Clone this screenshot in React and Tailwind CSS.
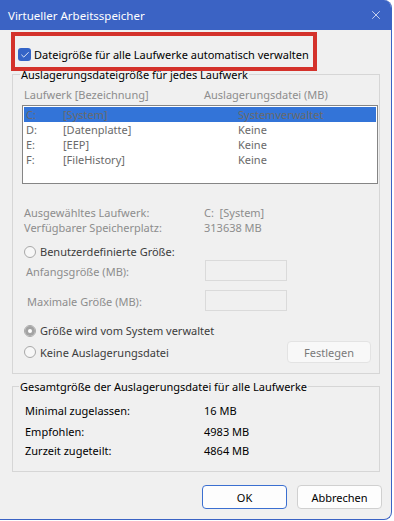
import { Check, X } from "lucide-react"

const drives = [
  { letter: "C:", label: "[System]", size: "Systemverwaltet", selected: true },
  { letter: "D:", label: "[Datenplatte]", size: "Keine" },
  { letter: "E:", label: "[EEP]", size: "Keine" },
  { letter: "F:", label: "[FileHistory]", size: "Keine" },
]

function Radio({ checked, label }) {
  return (
    <div className="flex items-center h-[15px]">
      <span className="w-[12px] h-[12px] rounded-full border border-[#a8a8a8] bg-[#f7f7f7] flex items-center justify-center">
        {checked && (
          <span className="w-[10px] h-[10px] rounded-full bg-[#a3a3a3] flex items-center justify-center">
            <span className="w-[4px] h-[4px] rounded-full bg-white" />
          </span>
        )}
      </span>
      <span className="ml-[4px] text-[#3c3c3c]">{label}</span>
    </div>
  )
}

function App() {
  return (
    <div
      className="w-[394px] h-[521px] bg-white text-[11px] leading-[15px]"
      style={{ fontFamily: '"Segoe UI", "Noto Sans", sans-serif' }}
    >
      <div className="w-[392px] h-[520px] flex flex-col bg-[#f0f0f0] border-r border-b border-[#3b63c4] rounded-tr-[8px] rounded-br-[8px] overflow-hidden">
        <div className="h-[30px] bg-[#3b63c4] flex items-center justify-between pl-[8px] pr-[8px] text-white text-[11.5px] shrink-0">
          <span>Virtueller Arbeitsspeicher</span>
          <X size={14} strokeWidth={1.2} className="text-white" />
        </div>

        <div className="relative flex-1 pl-[12px]">
          <div className="flex items-center h-[15px] mt-[17px] ml-[6px]">
            <span className="w-[13px] h-[13px] rounded-[3px] bg-[#3464c7] flex items-center justify-center">
              <Check size={10} strokeWidth={2} className="text-white" />
            </span>
            <span className="ml-[3px] text-black">Dateigröße für alle Laufwerke automatisch verwalten</span>
          </div>

          <fieldset className="mt-[5px] w-[368px] border border-[#d6d6d6] pb-[10px]">
            <legend className="ml-[7px] px-[1px] text-black">Auslagerungsdateigröße für jedes Laufwerk</legend>

            <div className="flex h-[15px] mt-[5px] text-[#8d8d8d]">
              <span className="ml-[11px] w-[180px]">Laufwerk [Bezeichnung]</span>
              <span>Auslagerungsdatei (MB)</span>
            </div>

            <div className="mt-[3px] ml-[9px] w-[356px] h-[79px] border border-[#858585] bg-white p-[1px]">
              {drives.map((d) => (
                <div
                  key={d.letter}
                  className={
                    "flex h-[15px] pl-[2px] text-[#6a6a6a] " + (d.selected ? "bg-[#3374d8]" : "")
                  }
                >
                  <span className="w-[37px]">{d.letter}</span>
                  <span className="w-[175px]">{d.label}</span>
                  <span>{d.size}</span>
                </div>
              ))}
            </div>

            <div className="mt-[21px] text-[#8d8d8d]">
              <div className="flex h-[15px]">
                <span className="ml-[11px] w-[180px]">Ausgewähltes Laufwerk:</span>
                <span>C:&nbsp; [System]</span>
              </div>
              <div className="flex h-[15px]">
                <span className="ml-[11px] w-[180px]">Verfügbarer Speicherplatz:</span>
                <span>313638 MB</span>
              </div>
            </div>

            <div className="mt-[9px] ml-[11px]">
              <Radio label="Benutzerdefinierte Größe:" />
            </div>

            <div className="flex items-center h-[21px] mt-[1px] text-[#8d8d8d]">
              <span className="ml-[13px] w-[179px] pt-[2px]">Anfangsgröße (MB):</span>
              <span className="w-[82px] h-[21px] border border-[#dadada]" />
            </div>

            <div className="flex items-center h-[21px] mt-[9px] text-[#8d8d8d]">
              <span className="ml-[14px] w-[178px] pt-[2px]">Maximale Größe (MB):</span>
              <span className="w-[82px] h-[21px] border border-[#dadada]" />
            </div>

            <div className="mt-[12px] ml-[11px]">
              <Radio checked label="Größe wird vom System verwaltet" />
            </div>

            <div className="flex items-center justify-between h-[22px] mt-[3px] ml-[11px] mr-[8px]">
              <Radio label="Keine Auslagerungsdatei" />
              <button className="w-[84px] h-[22px] rounded-[4px] border border-[#e3e3e3] bg-[#f8f8f8] text-[#7a7a7a]">
                Festlegen
              </button>
            </div>
          </fieldset>

          <fieldset className="mt-[5px] w-[368px] border border-[#d6d6d6] pb-[13px] text-black">
            <legend className="ml-[6px] px-[1px]">Gesamtgröße der Auslagerungsdatei für alle Laufwerke</legend>
            <div className="flex h-[15px] mt-[9px]">
              <span className="ml-[12px] w-[179px]">Minimal zugelassen:</span>
              <span>16 MB</span>
            </div>
            <div className="flex h-[15px] mt-[6px]">
              <span className="ml-[12px] w-[179px]">Empfohlen:</span>
              <span>4983 MB</span>
            </div>
            <div className="flex h-[15px] mt-[4px]">
              <span className="ml-[12px] w-[179px]">Zurzeit zugeteilt:</span>
              <span>4864 MB</span>
            </div>
          </fieldset>

          <div className="flex justify-end gap-[10px] mt-[13px] pr-[9px]">
            <button className="w-[85px] h-[24px] rounded-[4px] border border-[#3b6fd0] bg-[#fdfdfd] text-black">
              OK
            </button>
            <button className="w-[85px] h-[24px] rounded-[4px] border border-[#d0d0d0] bg-[#fdfdfd] text-black">
              Abbrechen
            </button>
          </div>

          <div className="absolute left-[11px] top-[2px] w-[306px] h-[39px] border-[4px] border-[#d4322b] pointer-events-none" />
        </div>
      </div>
    </div>
  )
}

export default App
